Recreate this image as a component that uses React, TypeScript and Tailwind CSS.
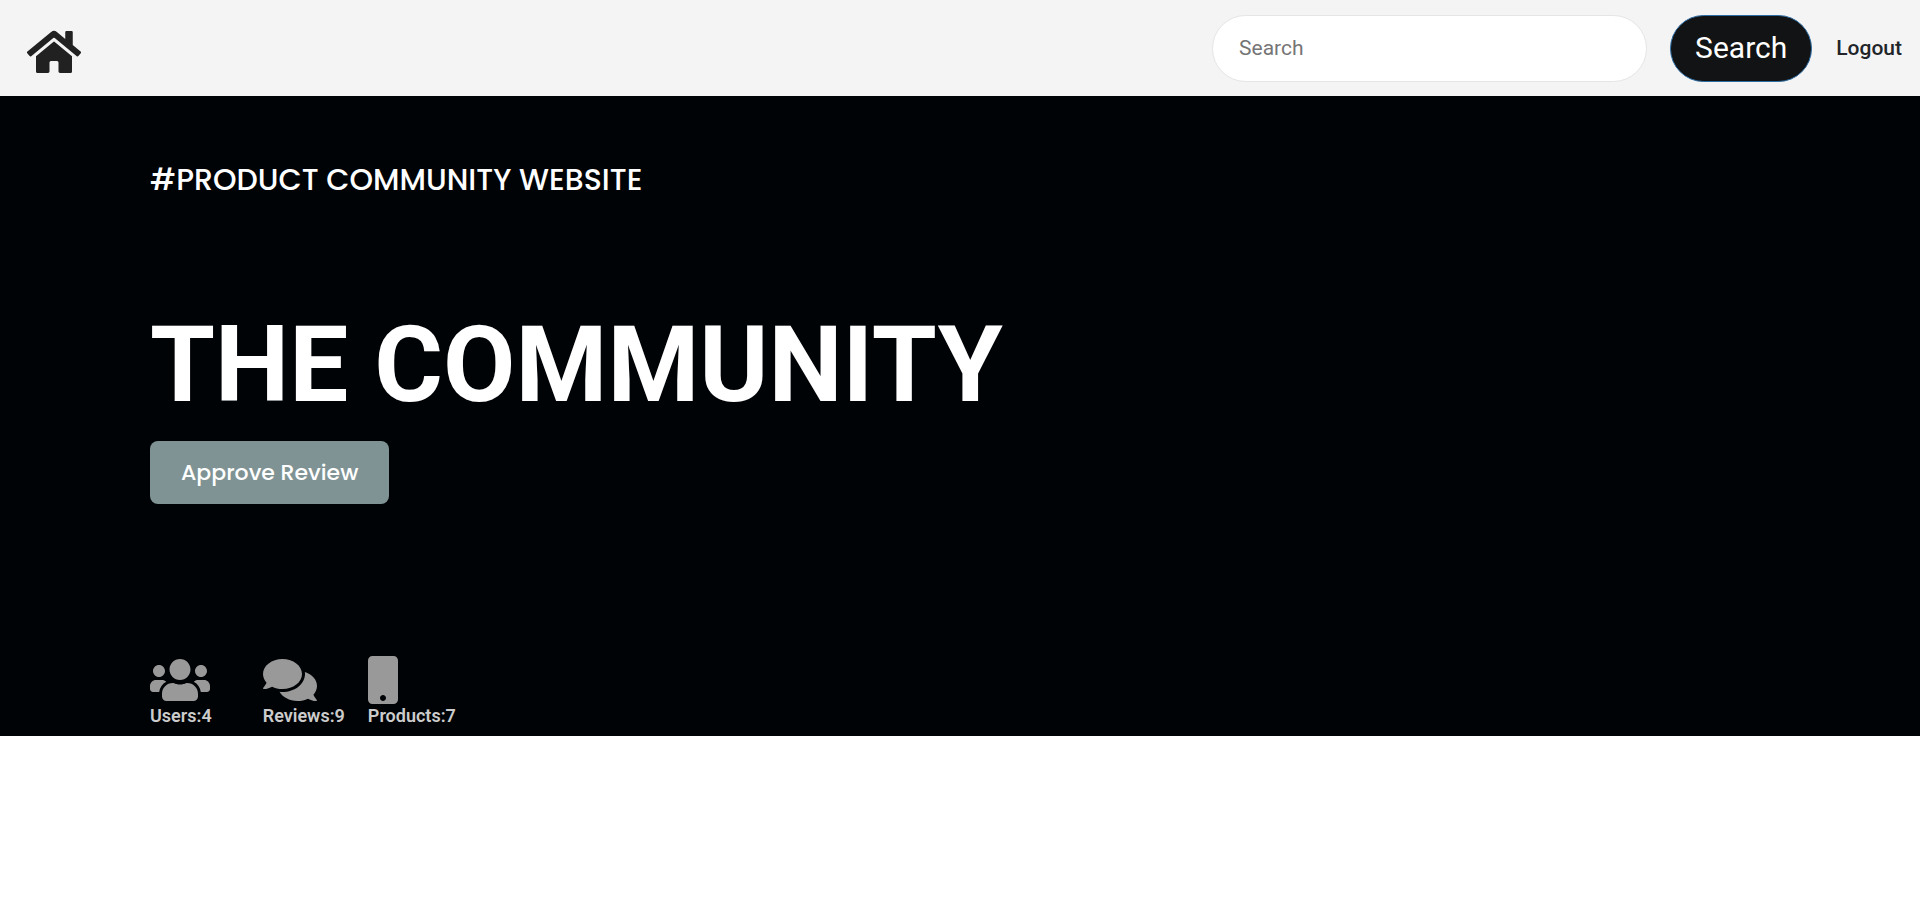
import { FaComments, FaHome, FaMobile, FaUsers } from "react-icons/fa";

const stats = [
  { label: "Users", value: 4, Icon: FaUsers, size: "w-[60px]", spacing: "mr-[51px]" },
  { label: "Reviews", value: 9, Icon: FaComments, size: "w-[54px]", spacing: "mr-[23px]" },
  { label: "Products", value: 7, Icon: FaMobile, size: "w-[30px]", spacing: "" },
];

export default function App() {
  return (
    <div className="min-h-screen bg-white font-['Roboto',sans-serif]">
      <header className="flex h-24 items-center justify-between bg-[#f4f4f4] pr-[18px] pl-[27px]">
        <a href="#" aria-label="Home" className="mt-2 text-[#212121]">
          <FaHome className="h-12 w-[54px]" />
        </a>
        <div className="flex items-center">
          <form className="flex items-center" onSubmit={(e) => e.preventDefault()}>
            <input
              type="search"
              aria-label="Search"
              placeholder="Search"
              className="h-[67px] w-[435px] rounded-full border border-[#e5e5e5] bg-white px-[26px] text-[21px] text-[#212121] outline-none placeholder:text-[#757575]"
            />
            <button
              type="submit"
              className="ml-[23px] h-[67px] rounded-full border border-[#2e6da4] bg-[#111314] px-6 text-[30px] leading-[42px] text-white"
            >
              Search
            </button>
          </form>
          <a href="#" className="ml-6 text-[21px] leading-8 font-medium text-[#212529]">
            Logout
          </a>
        </div>
      </header>

      <main className="bg-[#000306] px-[150px] pt-[60px] pb-2 text-white">
        <p className="font-['Poppins','Lato',sans-serif] text-[30px] leading-[48px] font-medium">
          #PRODUCT COMMUNITY WEBSITE
        </p>
        <h1 className="mt-24 text-[105px] leading-[132px] font-bold">THE COMMUNITY</h1>
        <button
          type="button"
          className="mt-[9px] h-[63px] rounded-lg bg-[#7f9394] px-[31px] font-['Poppins','Lato',sans-serif] text-[22px] font-medium"
        >
          Approve Review
        </button>
        <div className="mt-[152px] flex text-[18px] leading-6 font-semibold text-[#cccccc]">
          {stats.map(({ label, value, Icon, size, spacing }) => (
            <div key={label} className={spacing}>
              <Icon className={`h-12 text-[#999999] ${size}`} />
              <span>
                {label}:{value}
              </span>
            </div>
          ))}
        </div>
      </main>
    </div>
  );
}
